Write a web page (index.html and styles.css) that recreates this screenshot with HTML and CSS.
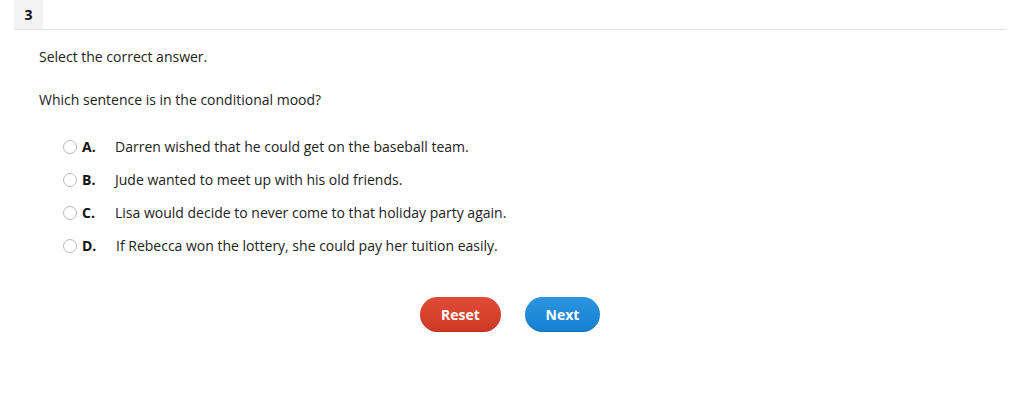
FILE: index.html
```html
<!DOCTYPE html>
<html>
<head>
<meta charset="utf-8">
<link rel="stylesheet" href="styles.css">
</head>
<body>
<div class="page">
  <div class="qhead"><span class="qnum">3</span></div>
  <div class="qbody">
    <p class="instr">Select the correct answer.</p>
    <p class="prompt">Which sentence is in the conditional mood?</p>
    <ul class="options">
      <li class="opt"><span class="radio"></span><span class="letter">A.</span><span class="text">Darren wished that he could get on the baseball team.</span></li>
      <li class="opt"><span class="radio"></span><span class="letter">B.</span><span class="text">Jude wanted to meet up with his old friends.</span></li>
      <li class="opt"><span class="radio"></span><span class="letter">C.</span><span class="text">Lisa would decide to never come to that holiday party again.</span></li>
      <li class="opt"><span class="radio"></span><span class="letter">D.</span><span class="text d">If Rebecca won the lottery, she could pay her tuition easily.</span></li>
    </ul>
  </div>
  <div class="actions">
    <button class="btn reset">Reset</button>
    <button class="btn next">Next</button>
  </div>
</div>
</body>
</html>
```

FILE: styles.css
```css
html, body {
  margin: 0;
  padding: 0;
  background: #fff;
}
body {
  font-family: "Open Sans", "Liberation Sans", sans-serif;
  font-size: 14px;
  color: #222;
}
.page {
  padding: 0 13px 0 14px;
}
.qhead {
  height: 29px;
  border-bottom: 1px solid #e4e4e4;
  display: flex;
}
.qnum {
  width: 29px;
  background: #f3f3f3;
  font-weight: 700;
  font-size: 14px;
  color: #111;
  display: flex;
  align-items: center;
  justify-content: center;
}
.qbody {
  padding-left: 25px;
}
.instr {
  margin: 17px 0 0;
  line-height: 20px;
}
.prompt {
  margin: 23px 0 0;
  line-height: 20px;
}
.options {
  list-style: none;
  margin: 20px 0 0;
  padding: 0 0 0 24px;
}
.opt {
  display: flex;
  align-items: center;
  height: 33px;
}
.radio {
  width: 12px;
  height: 12px;
  border: 1px solid #b9b9b9;
  border-radius: 50%;
  box-sizing: content-box;
  background: #fff;
}
.letter {
  font-weight: 700;
  margin-left: 5px;
  width: 33px;
  color: #111;
}
.text.d {
  margin-left: 1px;
}
.actions {
  display: flex;
  justify-content: center;
  gap: 24px;
  margin-top: 35px;
}
.btn {
  height: 35px;
  border: none;
  border-radius: 18px;
  color: #fff;
  font-family: "Open Sans", "Liberation Sans", sans-serif;
  font-weight: 700;
  font-size: 14px;
  padding: 0;
  cursor: pointer;
}
.reset {
  width: 81px;
  background: linear-gradient(#e04b37, #cf3a27);
  box-shadow: inset 0 -1px 0 rgba(0,0,0,0.12);
}
.next {
  width: 75px;
  background: linear-gradient(#2b95e0, #1580d0);
  box-shadow: inset 0 -1px 0 rgba(0,0,0,0.12);
}
```
